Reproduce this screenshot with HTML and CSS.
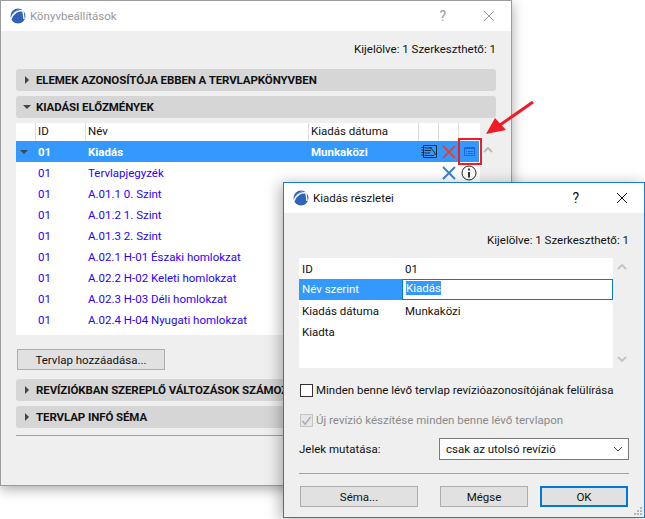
FILE: index.html
```html
<!DOCTYPE html>
<html lang="hu">
<head>
<meta charset="utf-8">
<title>Könyvbeállítások</title>
<link rel="stylesheet" href="styles.css">
</head>
<body>
<section class="window book">
  <header class="titlebar inactive">
    <svg class="logo" viewBox="0 0 16 16"><circle cx="8" cy="8" r="7.5" fill="#2f62b8"/><path d="M1 9C3 4 7 1 11 1L6 3 3 7z" fill="#9dbbe6"/><path d="M1 11C3 5 8 2 13 3l1 8" fill="none" stroke="#fff" stroke-width="1.4"/></svg>
    <span class="title">Könyvbeállítások</span>
    <span class="help">?</span>
    <svg class="close" viewBox="0 0 12 12"><path d="M1 1l10 10M11 1L1 11" fill="none" stroke="currentColor"/></svg>
  </header>
  <div class="book-body">
    <p class="status">Kijelölve: 1 Szerkeszthető: 1</p>
    <div class="panel-bar"><i class="tri right"></i>ELEMEK AZONOSÍTÓJA EBBEN A TERVLAPKÖNYVBEN</div>
    <div class="panel-bar"><i class="tri down"></i>KIADÁSI ELŐZMÉNYEK</div>
    <div class="table-wrap">
      <div class="table">
        <div class="row head">
          <span></span><span>ID</span><span>Név</span><span>Kiadás dátuma</span><span></span><span></span><span></span>
        </div>
        <div class="row selected">
          <span><i class="tri down"></i></span><span>01</span><span>Kiadás</span><span>Munkaközi</span>
          <span class="ic"><svg width="16" height="13" viewBox="0 0 16 13"><path d="M2.500 .5h13v12h-13z" fill="none" stroke="#1b2a3a"/><path d="M4 3h7M4 5.500h6M4 8h5M4 10.500h9M9 2l5 6v2" fill="none" stroke="#1b2a3a"/><path d="M.500 2.500h3M.500 5h3M.500 7.500h3M.500 10h3" stroke="#1b2a3a"/></svg></span>
          <span class="ic"><svg width="14" height="14" viewBox="0 0 14 14"><path d="M1 1l12 12M13 1L1 13" fill="none" stroke="#e8402a" stroke-width="1.800"/></svg></span>
          <span class="ic"><svg width="11" height="9" viewBox="0 0 11 9"><path d="M.5 .5h10v8H.5z" fill="none" stroke="#2067d6"/><path d="M.5 1.500h10M2 4.500h1M4 4.500h5M2 6.500h1M4 6.500h5" fill="none" stroke="#2067d6"/></svg></span>
        </div>
        <div class="row sheet">
          <span></span><span>01</span><span>Tervlapjegyzék</span><span></span><span></span>
          <span class="ic"><svg width="14" height="14" viewBox="0 0 14 14"><path d="M1 1l12 12M13 1L1 13" fill="none" stroke="#2f7de1" stroke-width="1.800"/></svg></span>
          <span class="ic"><svg width="16" height="16" viewBox="0 0 16 16"><circle cx="8" cy="8" r="7" fill="#fff" stroke="#222"/><path d="M8 3.500v2M8 7v5.500" stroke="#222" stroke-width="1.800"/></svg></span>
        </div>
        <div class="row sheet"><span></span><span>01</span><span>A.01.1 0. Szint</span></div>
        <div class="row sheet"><span></span><span>01</span><span>A.01.2 1. Szint</span></div>
        <div class="row sheet"><span></span><span>01</span><span>A.01.3 2. Szint</span></div>
        <div class="row sheet"><span></span><span>01</span><span>A.02.1 H-01 Északi homlokzat</span></div>
        <div class="row sheet"><span></span><span>01</span><span>A.02.2 H-02 Keleti homlokzat</span></div>
        <div class="row sheet"><span></span><span>01</span><span>A.02.3 H-03 Déli homlokzat</span></div>
        <div class="row sheet"><span></span><span>01</span><span>A.02.4 H-04 Nyugati homlokzat</span></div>
      </div>
      <svg class="scroll-up" width="10" height="6" viewBox="0 0 10 6"><path d="M1 5l4-4 4 4" fill="none" stroke="#bbb" stroke-width="2"/></svg>
    </div>
    <button class="btn add">Tervlap hozzáadása...</button>
    <div class="panel-bar"><i class="tri right"></i>REVÍZIÓKBAN SZEREPLŐ VÁLTOZÁSOK SZÁMOZÁSA</div>
    <div class="panel-bar"><i class="tri right"></i>TERVLAP INFÓ SÉMA</div>
    <hr class="rule">
  </div>
</section>

<div class="callout-box"></div>
<svg class="callout-arrow" width="54" height="40" viewBox="0 0 54 40"><path d="M50 4L17 27" stroke="#ee1c25" stroke-width="3" fill="none"/><path d="M3 36L12 20 23 32z" fill="#ee1c25"/></svg>

<section class="window detail">
  <header class="titlebar">
    <svg class="logo" viewBox="0 0 16 16"><circle cx="8" cy="8" r="7.5" fill="#2f62b8"/><path d="M1 9C3 4 7 1 11 1L6 3 3 7z" fill="#9dbbe6"/><path d="M1 11C3 5 8 2 13 3l1 8" fill="none" stroke="#fff" stroke-width="1.4"/></svg>
    <span class="title">Kiadás részletei</span>
    <span class="help">?</span>
    <svg class="close" viewBox="0 0 12 12"><path d="M1 1l10 10M11 1L1 11" fill="none" stroke="currentColor"/></svg>
  </header>
  <div class="detail-body">
    <p class="status">Kijelölve: 1 Szerkeszthető: 1</p>
    <div class="form-wrap">
      <div class="form-list">
        <div class="frow"><span>ID</span><span>01</span></div>
        <div class="frow active"><span class="flabel">Név szerint</span><span class="field"><span class="sel">Kiadás</span></span></div>
        <div class="frow"><span>Kiadás dátuma</span><span>Munkaközi</span></div>
        <div class="frow"><span>Kiadta</span><span></span></div>
      </div>
      <div class="form-scroll">
        <svg width="10" height="6" viewBox="0 0 10 6"><path d="M1 5l4-4 4 4" fill="none" stroke="#c4c4c4" stroke-width="2"/></svg>
        <svg width="10" height="6" viewBox="0 0 10 6"><path d="M1 1l4 4 4-4" fill="none" stroke="#c4c4c4" stroke-width="2"/></svg>
      </div>
    </div>
    <label class="check"><span class="box"></span>Minden benne lévő tervlap revízióazonosítójának felülírása</label>
    <label class="check disabled"><span class="box"><svg width="12" height="12" viewBox="0 0 12 12"><path d="M1.500 6l3 3.500 6-8" fill="none" stroke="#a8a8a8" stroke-width="1.500"/></svg></span>Új revízió készítése minden benne lévő tervlapon</label>
    <div class="select-row">
      <span class="select-label">Jelek mutatása:</span>
      <span class="select">csak az utolsó revízió<svg width="10" height="6" viewBox="0 0 10 6"><path d="M1 1l4 4 4-4" fill="none" stroke="#444"/></svg></span>
    </div>
    <hr class="rule">
    <div class="actions">
      <button class="btn schema">Séma...</button>
      <button class="btn cancel">Mégse</button>
      <button class="btn ok">OK</button>
    </div>
    <svg class="grip" width="10" height="10" viewBox="0 0 10 10"><path d="M7 1h2v2H7zM4 4h2v2H4zM7 4h2v2H7zM1 7h2v2H1zM4 7h2v2H4zM7 7h2v2H7z" fill="#b5b5b5"/></svg>
  </div>
</section>
</body>
</html>
```
FILE: styles.css
```css
* { box-sizing: border-box; }
html, body { margin: 0; height: 100%; }
body {
  position: relative;
  overflow: hidden;
  background: #fff;
  font: 11.5px/16px Roboto, sans-serif;
  color: #111;
}
.window {
  position: absolute;
  display: flex;
  flex-direction: column;
  background: #efefef;
  overflow: hidden;
}
.book {
  left: 0; top: 0;
  width: 512px; height: 486px;
  border: 1px solid #9c9c9c;
  box-shadow: 0 3px 12px rgba(0,0,0,.35);
}
.detail {
  left: 283px; top: 182px;
  width: 362px; height: 336px;
  border: 1px solid #1a7ccb;
  box-shadow: -3px 2px 14px rgba(0,0,0,.3);
}
.titlebar {
  flex: none;
  display: flex;
  align-items: center;
  height: 30px;
  background: #fff;
  padding: 0 16px 0 9px;
}
.inactive { color: #999; }
.logo { width: 16px; height: 16px; margin-right: 4px; }
.title { flex: 1; }
.help { font-size: 14px; margin-right: 37px; }
.close { width: 12px; height: 12px; }
.inactive .close { color: #999; }
.status { margin: 0; text-align: right; }
.book-body { flex: 1; padding: 10px 15px 0; }
.book-body > .status { margin-bottom: 12px; }
.panel-bar {
  display: flex;
  align-items: center;
  height: 22px;
  margin-bottom: 5px;
  padding-left: 7px;
  border-radius: 3px;
  background: #d6d6d6;
  font-weight: 700;
  letter-spacing: -.1px;
  white-space: nowrap;
  overflow: hidden;
}
.tri { display: inline-block; width: 0; height: 0; flex: none; }
.tri.right { border-left: 4px solid #444; border-top: 4px solid transparent; border-bottom: 4px solid transparent; margin-right: 7px; margin-left: 2px; }
.tri.down { border-top: 4px solid #444; border-left: 4px solid transparent; border-right: 4px solid transparent; margin-right: 5px; }
.table-wrap { position: relative; margin-bottom: 14px; }
.table { width: 464px; height: 212px; background: #fff; }
.row {
  display: grid;
  grid-template-columns: 19px 50px 223px 110px 20px 20px 20px;
  height: 21px;
  align-items: center;
}
.row > span { padding-left: 3px; white-space: nowrap; }
.head { height: 18px; }
.head > span { height: 18px; border-left: 1px solid #ddd; padding-left: 2px; }
.head > span:first-child { border-left: 0; }
.selected { background: #3399ff; color: #fff; font-weight: 700; }
.selected .tri { margin: 0 0 2px 1px; }
.sheet { color: #2a00ff; }
.row > .ic { display: flex; justify-content: center; align-items: center; padding: 0 0 0 2px; }
.scroll-up { position: absolute; left: 467px; top: 24px; }
.btn {
  display: block;
  padding: 0;
  border: 1px solid #adadad;
  background: #e1e1e1;
  font: inherit;
  color: #111;
}
.add { width: 148px; height: 21px; margin: 0 0 9px 1px; }
.rule { margin: 7px 0 0; border: 0; border-top: 1px solid #a0a0a0; }
.callout-box {
  position: absolute;
  left: 458px; top: 138px;
  width: 24px; height: 27px;
  border: 2px solid #ee1c25;
  box-shadow: inset -1px -1px 0 #fff;
}
.callout-arrow { position: absolute; left: 483px; top: 98px; }
.detail-body { position: relative; flex: 1; padding: 19px 15px 0; }
.form-wrap { position: relative; margin-top: 10px; }
.form-list { width: 314px; height: 110px; background: #fff; }
.frow {
  display: grid;
  grid-template-columns: 103px 1fr;
  align-items: center;
  height: 21px;
  padding-left: 3px;
}
.active { padding-left: 0; }
.flabel { background: #3399ff; color: #fff; height: 21px; line-height: 21px; padding-left: 3px; }
.field {
  height: 21px;
  line-height: 17px;
  padding-left: 3px;
  background: #fff;
  border: 1px solid #0b78d0;
}
.sel { background: #3399ff; color: #fff; }
.form-scroll {
  position: absolute;
  left: 318px; top: 6px; bottom: 6px;
  display: flex;
  flex-direction: column;
  justify-content: space-between;
}
.check { display: flex; align-items: center; gap: 3px; height: 16px; margin: 14px 0 0 1px; white-space: nowrap; }
.check + .check { margin-top: 14px; }
.box { display: flex; flex: none; width: 13px; height: 13px; border: 1px solid #333; background: #fff; }
.disabled { color: #8a8a8a; }
.disabled .box { border-color: #c4c4c4; background: #e6e6e6; }
.select-row { display: flex; align-items: center; justify-content: space-between; margin-top: 10px; }
.select {
  display: flex;
  align-items: center;
  justify-content: space-between;
  width: 190px; height: 22px;
  padding: 0 5px 0 6px;
  background: #fff;
  border: 1px solid #7a7a7a;
}
.detail-body .rule { margin-top: 13px; }
.actions { display: flex; margin: 12px 0 0 1px; }
.actions .btn { height: 21px; }
.schema { width: 118px; margin-right: 22px; }
.cancel { width: 88px; margin-right: 12px; }
.ok { width: 88px; border: 2px solid #0078d7 !important; }
.grip { position: absolute; right: 1px; bottom: 1px; }
```
